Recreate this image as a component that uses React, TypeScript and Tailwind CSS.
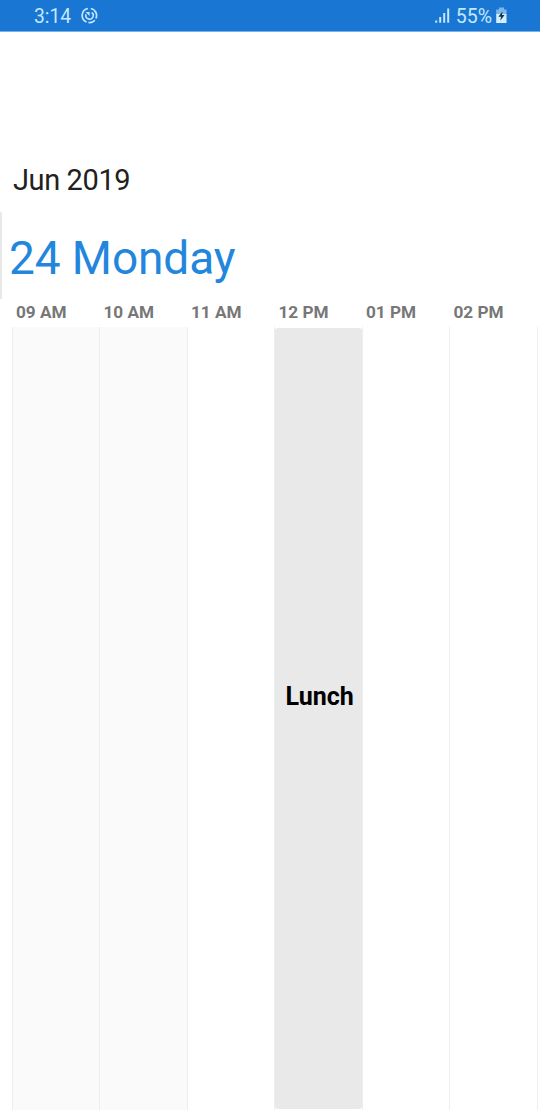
const hours = ["09 AM", "10 AM", "11 AM", "12 PM", "01 PM", "02 PM"];

function SyncIcon() {
  return (
    <svg className="mb-px ml-[9.5px] h-[17px] w-[17px]" viewBox="0 0 17 17" fill="none" stroke="#c4e8ff">
      <path d="M6.9 1.5A7.1 7.1 0 0 0 5.5 15M7.4 15.5A7.1 7.1 0 0 0 13.9 13.2M14.9 11.5A7.1 7.1 0 0 0 9.8 1.5" strokeWidth="1.7" />
      <path d="M5 7.3A3.7 3.7 0 1 0 10.7 5.5" strokeWidth="1.6" />
      <path d="M4.5 4.9h4.1v4.1z" fill="#c4e8ff" stroke="none" />
    </svg>
  );
}

function SignalIcon() {
  return (
    <svg className="h-[16px] w-[15px]" viewBox="0 0 15 16" fill="#c4e8ff">
      <rect x="0.2" y="12.5" width="2" height="2.2" />
      <rect x="4.2" y="9" width="2" height="5.7" />
      <rect x="8.2" y="5" width="2" height="9.7" />
      <rect x="12.2" y="0.5" width="2" height="14.2" />
    </svg>
  );
}

function BatteryIcon() {
  return (
    <svg className="ml-[4px] h-[17px] w-[11px]" viewBox="0 0 11 17">
      <path d="M3 0.5h5v2h2.5v5H0.2v-5H3z" fill="#78b8ec" />
      <path d="M0.2 7h10.3v9H0.2z" fill="#d3eefd" />
      <path d="M6.6 4.2L2.4 9.8h2.7L4.2 13.8 8.6 8H6z" fill="#17334d" />
    </svg>
  );
}

export default function App() {
  return (
    <div className="flex h-[1110px] w-[540px] flex-col overflow-hidden bg-white font-['Roboto',sans-serif]">
      <header className="flex h-8 shrink-0 items-center border-b border-[#75b0e6] bg-[#1976d2] pr-[33px] pl-[34px] text-[#c4e8ff]">
        <span className="pt-[2px] text-[19.3px] leading-[30px]">3:14</span>
        <SyncIcon />
        <div className="ml-auto flex items-center">
          <SignalIcon />
          <span className="ml-[6px] pt-[2px] text-[19.5px] leading-[30px]">55%</span>
          <BatteryIcon />
        </div>
      </header>

      <h1 className="mt-[128px] h-[40px] shrink-0 pl-[13px] text-[29px] leading-[40px] tracking-[-0.4px] text-[#212121]">Jun 2019</h1>

      <div className="mt-[12px] flex h-[87px] shrink-0 border-l-2 border-[#e8e8e8] pl-[7px]">
        <h2 className="text-[46px] leading-[93px] tracking-[-0.1px] whitespace-nowrap text-[#2186dc]">24 Monday</h2>
      </div>

      <div className="flex h-[28px] shrink-0 pl-[12px]">
        {hours.map((hour) => (
          <div key={hour} className="w-[87.5px] shrink-0 pl-1 text-[17.2px] leading-[26px] font-bold text-[#777777]">
            {hour}
          </div>
        ))}
      </div>

      <main className="flex h-[783px] shrink-0 pl-[11.8px]">
        {hours.map((hour, index) => (
          <section
            key={hour}
            className={`flex w-[87.5px] shrink-0 border-l border-[#eeeeee] ${index < 2 ? "bg-[#fafafa]" : "bg-white"}`}
          >
            {hour === "12 PM" && (
              <div className="mt-px mb-px flex flex-1 items-center justify-center rounded-[3px] bg-[#e9e9e9] pb-[43.5px] pl-[2px] text-[25px] font-bold text-black">
                Lunch
              </div>
            )}
          </section>
        ))}
        <div className="w-[3px] border-l border-[#eeeeee]" />
      </main>
    </div>
  );
}
